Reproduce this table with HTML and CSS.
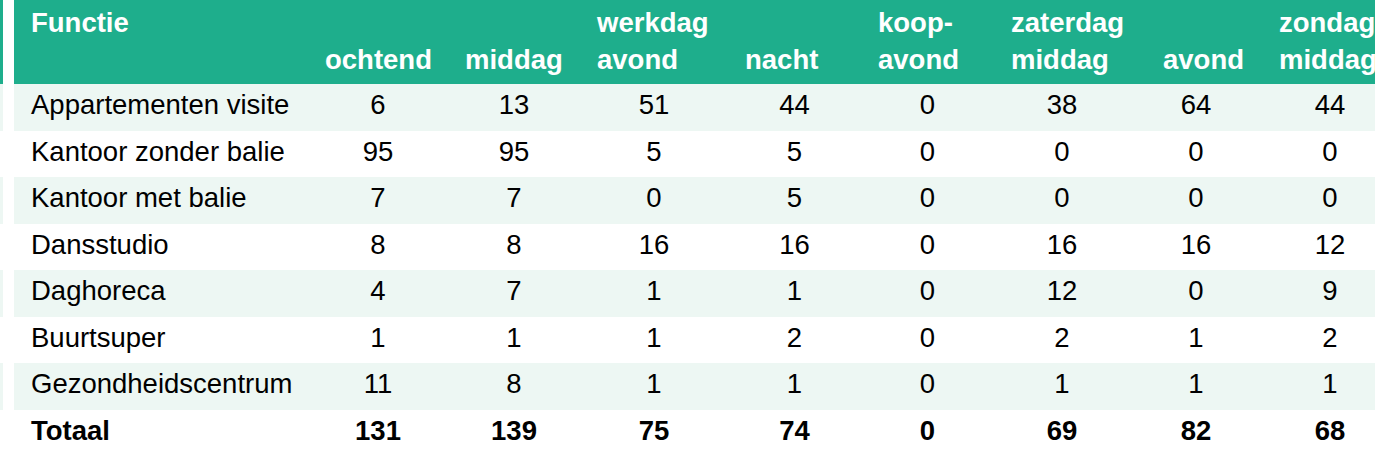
FILE: index.html
```html
<!DOCTYPE html>
<html lang="nl">
<head>
<meta charset="utf-8">
<title>Parkeerbehoefte per functie</title>
<link rel="stylesheet" href="styles.css">
</head>
<body>
<div class="page">
  <div class="strip">
    <div class="strip-head"></div>
    <div class="strip-row alt"></div>
    <div class="strip-row"></div>
    <div class="strip-row alt"></div>
    <div class="strip-row"></div>
    <div class="strip-row alt"></div>
    <div class="strip-row"></div>
    <div class="strip-row alt"></div>
    <div class="strip-row"></div>
  </div>
  <table class="data">
    <colgroup>
      <col class="c-label">
      <col class="c-140">
      <col class="c-132">
      <col class="c-148">
      <col class="c-133">
      <col class="c-133">
      <col class="c-136">
      <col class="c-132">
      <col class="c-136">
    </colgroup>
    <thead>
      <tr>
        <th class="h-label">Functie</th>
        <th>ochtend</th>
        <th>middag</th>
        <th>werkdag<br>avond</th>
        <th>nacht</th>
        <th>koop-<br>avond</th>
        <th>zaterdag<br>middag</th>
        <th class="h-wide">avond</th>
        <th>zondag<br>middag</th>
      </tr>
    </thead>
    <tbody>
      <tr class="alt"><td>Appartementen visite</td><td>6</td><td>13</td><td>51</td><td>44</td><td>0</td><td>38</td><td>64</td><td>44</td></tr>
      <tr><td>Kantoor zonder balie</td><td>95</td><td>95</td><td>5</td><td>5</td><td>0</td><td>0</td><td>0</td><td>0</td></tr>
      <tr class="alt"><td>Kantoor met balie</td><td>7</td><td>7</td><td>0</td><td>5</td><td>0</td><td>0</td><td>0</td><td>0</td></tr>
      <tr><td>Dansstudio</td><td>8</td><td>8</td><td>16</td><td>16</td><td>0</td><td>16</td><td>16</td><td>12</td></tr>
      <tr class="alt"><td>Daghoreca</td><td>4</td><td>7</td><td>1</td><td>1</td><td>0</td><td>12</td><td>0</td><td>9</td></tr>
      <tr><td>Buurtsuper</td><td>1</td><td>1</td><td>1</td><td>2</td><td>0</td><td>2</td><td>1</td><td>2</td></tr>
      <tr class="alt"><td>Gezondheidscentrum</td><td>11</td><td>8</td><td>1</td><td>1</td><td>0</td><td>1</td><td>1</td><td>1</td></tr>
      <tr class="total"><td>Totaal</td><td>131</td><td>139</td><td>75</td><td>74</td><td>0</td><td>69</td><td>82</td><td>68</td></tr>
    </tbody>
  </table>
</div>
</body>
</html>
```
FILE: styles.css
```css
html, body {
  margin: 0;
  padding: 0;
  background: #ffffff;
  overflow: hidden;
}

body {
  font-family: "Liberation Sans", Arial, sans-serif;
  font-size: 27.5px;
  color: #000000;
}

.page {
  display: flex;
  gap: 11px;
  width: 1400px;
}

.strip {
  flex: 0 0 3px;
  display: flex;
  flex-direction: column;
}

.strip-head {
  height: 84px;
  background: #1eae8c;
}

.strip-row {
  height: 46.5px;
}

.strip-row.alt {
  background: #edf7f3;
}

.data {
  flex: 0 0 auto;
  border-collapse: collapse;
  border-spacing: 0;
  table-layout: fixed;
  width: 1384px;
}

.c-label { width: 294px; }
.c-140 { width: 140px; }
.c-132 { width: 132px; }
.c-148 { width: 148px; }
.c-133 { width: 133px; }
.c-136 { width: 136px; }

.data thead tr {
  height: 84px;
  background: #1eae8c;
}

.data th {
  color: #ffffff;
  font-weight: bold;
  text-align: left;
  vertical-align: bottom;
  line-height: 37px;
  padding: 0 0 6px 17px;
  white-space: nowrap;
}

.data th.h-label {
  vertical-align: top;
  padding: 4px 0 0 17px;
}

.data th.h-wide {
  padding-left: 33px;
}

.data tbody tr {
  height: 46.5px;
}

.data tbody tr.alt {
  background: #edf7f3;
}

.data td {
  line-height: 42.5px;
  padding: 0 0 4px 0;
  vertical-align: top;
  text-align: center;
  white-space: nowrap;
}

.data td:first-child {
  text-align: left;
  padding-left: 17px;
}

.data tr.total td {
  font-weight: bold;
}
```
